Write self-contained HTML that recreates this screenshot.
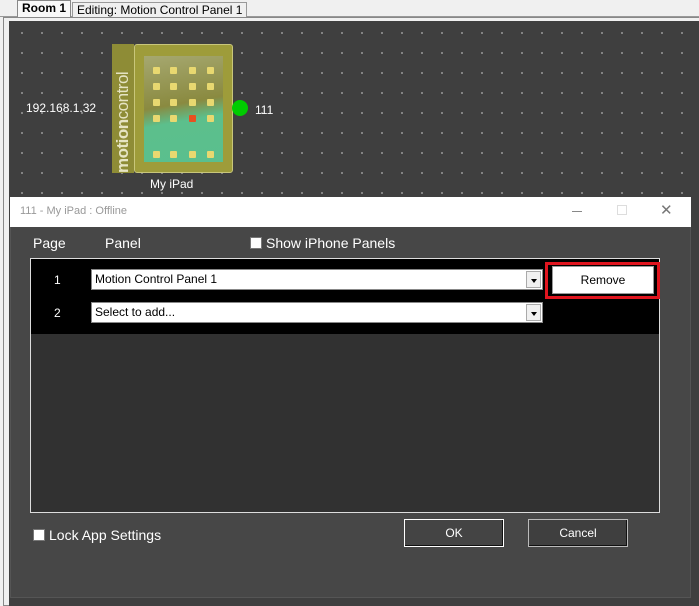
<!DOCTYPE html>
<html><head><style>
*{margin:0;padding:0;box-sizing:border-box}
body{width:699px;height:606px;background:#f0f0f0;position:relative;overflow:hidden;font-family:"Liberation Sans",sans-serif}
.a{position:absolute}
.tab{position:absolute;top:1px;height:16px;border:1px solid #999;border-bottom:none;background:#f0f0f0;font-size:12px;line-height:14px;padding:0 4px;color:#000}
.canvas{left:9px;top:21px;width:690px;height:585px;background:#3f3f3f;background-image:radial-gradient(circle,#9a9a9a 0.8px,transparent 1px);background-size:20px 20px;background-position:3px 2px}
.dd{position:absolute;left:91px;width:452px;height:21px;background:#fff;border:1px solid #888;font-size:12px;line-height:19px;padding-left:3px;color:#000}
.dd i{position:absolute;right:1px;top:1px;width:15px;height:17px;background:#f0f0f0;border:1px solid #aaa}
.dd i:after{content:"";position:absolute;left:4px;top:7px;border:3px solid transparent;border-top:4px solid #000}
.btn{position:absolute;height:28px;background:#444;border:1px solid #bbb;color:#fff;font-size:12px;text-align:center;line-height:26px;box-shadow:inset -1px -1px 0 #111}
.cb{display:inline-block;width:12px;height:12px;background:#fff;border:1px solid #777;vertical-align:-1px;margin-right:4px}
.ic{position:absolute;width:7px;height:7px;background:#e8d870;border-radius:1px}
</style></head><body>
<div class="a" style="left:0;top:16px;width:699px;height:1px;background:#999"></div>
<div class="tab" style="left:17px;top:0;height:17px;font-weight:bold;background:#f8f8f8;border-color:#888">Room 1</div>
<div class="tab" style="left:72px;top:2px">Editing: Motion Control Panel 1</div>
<div class="a" style="left:3px;top:17px;width:696px;height:589px;border:1px solid #888;border-right:none"></div>
<div class="a canvas"></div>
<div class="a" style="left:26px;top:101px;color:#fff;font-size:12px">192.168.1.32</div>
<div class="a" style="left:112px;top:44px;width:22px;height:129px;background:#8e8c36;color:#e6e4c4;font-size:17px;font-weight:bold;writing-mode:vertical-rl;transform:rotate(180deg);line-height:22px;text-align:left;letter-spacing:-0.5px">motion<span style="font-weight:normal">control</span></div>
<div class="a" style="left:134px;top:44px;width:99px;height:129px;background:#9e9c3a;border:1px solid #c8c67a;border-radius:3px"></div>
<div class="a" style="left:144px;top:56px;width:79px;height:106px;background:linear-gradient(170deg,#a6a870 0%,#8a8a40 45%,#5cbf8c 60%,#5abf8e 100%)"></div>
<div class="ic" style="left:153px;top:67px"></div><div class="ic" style="left:170px;top:67px"></div><div class="ic" style="left:189px;top:67px"></div><div class="ic" style="left:207px;top:67px"></div>
<div class="ic" style="left:153px;top:83px"></div><div class="ic" style="left:170px;top:83px"></div><div class="ic" style="left:189px;top:83px"></div><div class="ic" style="left:207px;top:83px"></div>
<div class="ic" style="left:153px;top:99px"></div><div class="ic" style="left:170px;top:99px"></div><div class="ic" style="left:189px;top:99px"></div><div class="ic" style="left:207px;top:99px"></div>
<div class="ic" style="left:153px;top:115px"></div><div class="ic" style="left:170px;top:115px"></div><div class="ic" style="left:189px;top:115px;background:#e85020"></div><div class="ic" style="left:207px;top:115px"></div>
<div class="ic" style="left:153px;top:151px"></div><div class="ic" style="left:170px;top:151px"></div><div class="ic" style="left:189px;top:151px"></div><div class="ic" style="left:207px;top:151px"></div>
<div class="a" style="left:232px;top:100px;width:16px;height:16px;border-radius:50%;background:#0c0"></div>
<div class="a" style="left:255px;top:103px;color:#fff;font-size:12px">111</div>
<div class="a" style="left:150px;top:177px;color:#fff;font-size:12px">My iPad</div>
<div class="a" style="left:10px;top:197px;width:681px;height:401px;background:#474747;border:1px solid #555"></div>
<div class="a" style="left:10px;top:197px;width:681px;height:30px;background:#fff"></div>
<div class="a" style="left:20px;top:205px;font-size:11px;color:#999">111 - My iPad : Offline</div>
<div class="a" style="left:572px;top:211px;width:10px;height:1px;background:#888"></div>
<div class="a" style="left:617px;top:205px;width:10px;height:10px;border:1px solid #ddd"></div>
<div class="a" style="left:660px;top:201px;font-size:15px;color:#777">✕</div>
<div class="a" style="left:33px;top:235px;color:#fff;font-size:14px">Page</div>
<div class="a" style="left:105px;top:235px;color:#fff;font-size:14px">Panel</div>
<div class="a" style="left:250px;top:235px;color:#fff;font-size:14px"><span class="cb"></span>Show iPhone Panels</div>
<div class="a" style="left:30px;top:258px;width:630px;height:255px;background:#313131;border:1px solid #ddd"></div>
<div class="a" style="left:31px;top:259px;width:628px;height:75px;background:#000"></div>
<div class="a" style="left:54px;top:273px;color:#fff;font-size:12px">1</div>
<div class="a" style="left:54px;top:306px;color:#fff;font-size:12px">2</div>
<div class="dd" style="top:269px">Motion Control Panel 1<i></i></div>
<div class="dd" style="top:302px">Select to add...<i></i></div>
<div class="a" style="left:545px;top:262px;width:115px;height:37px;border:3px solid #e0151f"></div>
<div class="a" style="left:552px;top:266px;width:102px;height:28px;background:#fff;border:1px solid #999;font-size:12px;text-align:center;line-height:26px">Remove</div>
<div class="a" style="left:33px;top:527px;color:#fff;font-size:14px"><span class="cb"></span>Lock App Settings</div>
<div class="btn" style="left:404px;top:519px;width:100px;border-color:#fff">OK</div>
<div class="btn" style="left:528px;top:519px;width:100px;background:#3f3f3f">Cancel</div>
</body></html>
